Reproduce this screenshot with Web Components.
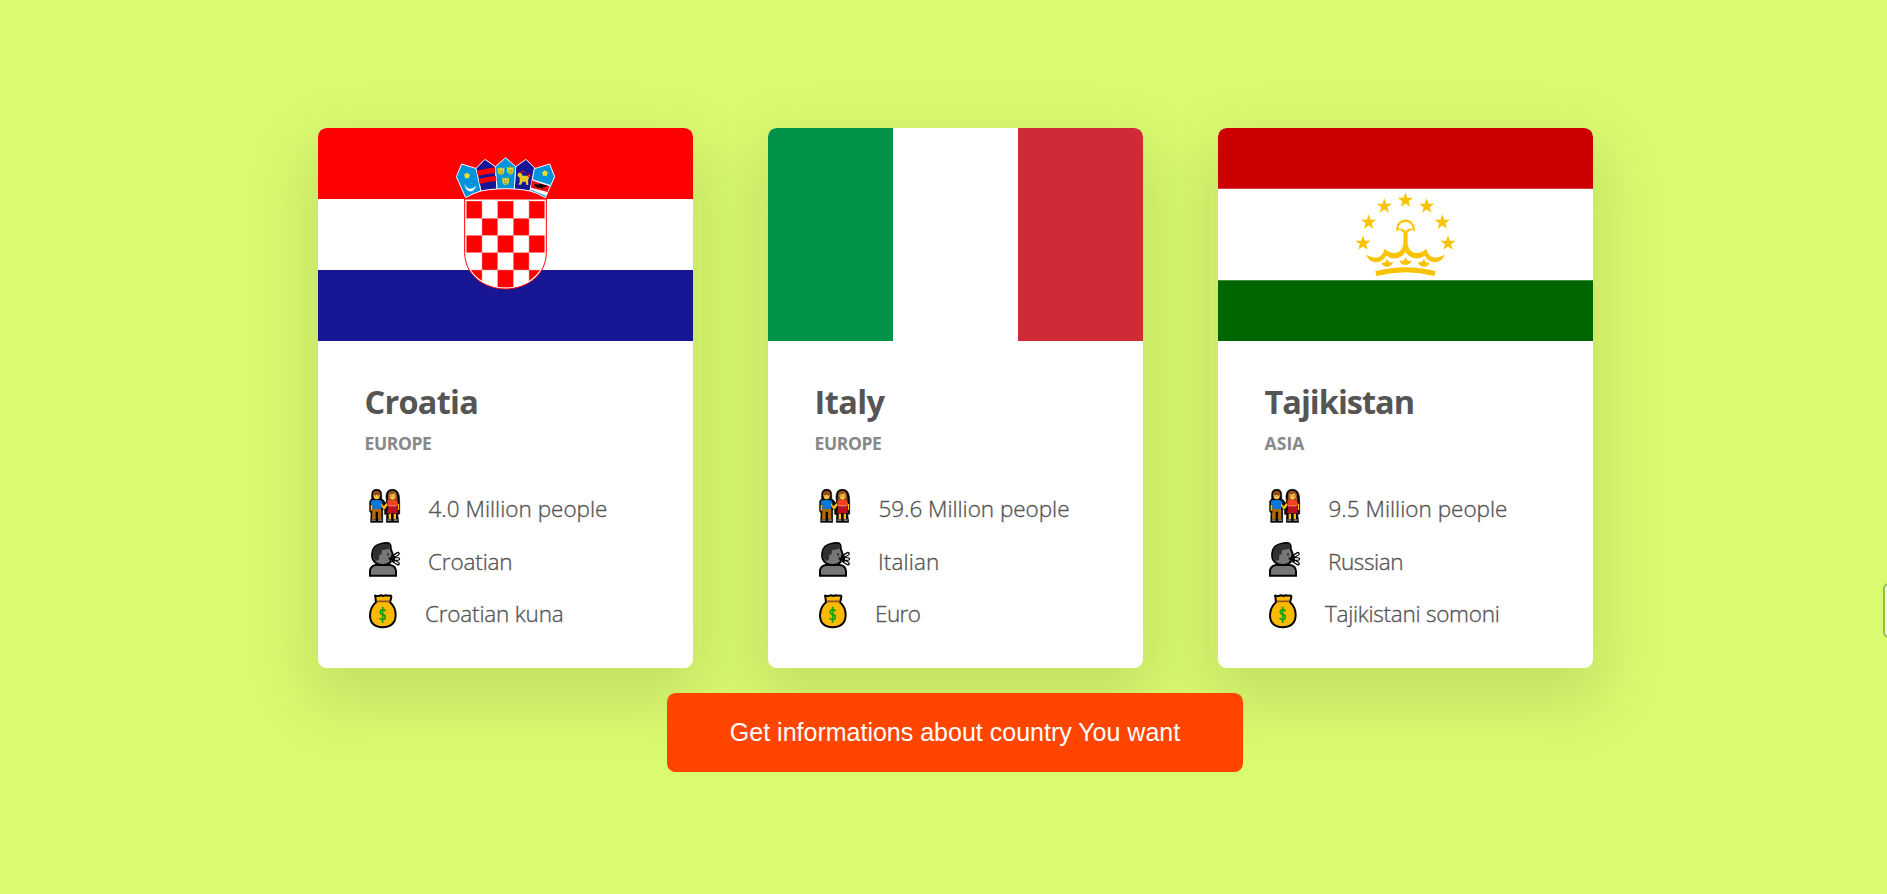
<!DOCTYPE html>
<html lang="en">
<head>
<meta charset="utf-8">
<title>Countries</title>
<style>
html,body{margin:0;height:100%}
body{background:#dafb70;font-family:"Open Sans","Noto Sans",sans-serif;color:#555;overflow:hidden}
</style>
</head>
<body>
<countries-page>
  <country-card>
    <country-flag slot="flag" code="hr"></country-flag>
    <fit-text slot="name" fit="113.5">Croatia</fit-text>
    <fit-text slot="region" fit="67">EUROPE</fit-text>
    <country-fact icon="people"><fit-text fit="179">4.0 Million people</fit-text></country-fact>
    <country-fact icon="speak"><fit-text fit="84.5">Croatian</fit-text></country-fact>
    <country-fact icon="money"><fit-text fit="138.5">Croatian kuna</fit-text></country-fact>
  </country-card>
  <country-card>
    <country-flag slot="flag" code="it"></country-flag>
    <fit-text slot="name" fit="70">Italy</fit-text>
    <fit-text slot="region" fit="67">EUROPE</fit-text>
    <country-fact icon="people"><fit-text fit="191">59.6 Million people</fit-text></country-fact>
    <country-fact icon="speak"><fit-text fit="61.5">Italian</fit-text></country-fact>
    <country-fact icon="money"><fit-text fit="45.5">Euro</fit-text></country-fact>
  </country-card>
  <country-card>
    <country-flag slot="flag" code="tj"></country-flag>
    <fit-text slot="name" fit="149.5">Tajikistan</fit-text>
    <fit-text slot="region" fit="40">ASIA</fit-text>
    <country-fact icon="people"><fit-text fit="179">9.5 Million people</fit-text></country-fact>
    <country-fact icon="speak"><fit-text fit="75">Russian</fit-text></country-fact>
    <country-fact icon="money"><fit-text fit="174.5">Tajikistani somoni</fit-text></country-fact>
  </country-card>
  <action-button slot="action">Get informations about country You want</action-button>
</countries-page>
<side-tab></side-tab>

<script>
const define = (name, html, setup) => customElements.define(name, class extends HTMLElement {
  connectedCallback() {
    if (this.shadowRoot) return;
    this.attachShadow({mode: 'open'}).innerHTML = typeof html === 'function' ? html(this) : html;
    if (setup) setup(this);
  }
});

const star = (x, y, r) => {
  let p = [];
  for (let i = 0; i < 10; i++) {
    const a = -Math.PI / 2 + i * Math.PI / 5, q = i % 2 ? r * .4 : r;
    p.push((x + q * Math.cos(a)).toFixed(1) + ',' + (y + q * Math.sin(a)).toFixed(1));
  }
  return `<polygon points="${p.join(' ')}"/>`;
};

/* Five-by-five red and white board of the Croatian shield */
const board = () => {
  const xs = [79, 126, 173, 220, 267, 314], ys = [168, 220, 271, 323, 375, 428];
  let s = '';
  for (let r = 0; r < 5; r++) for (let c = 0; c < 5; c++) if ((r + c) % 2 === 0)
    s += `<rect x="${xs[c]}" y="${ys[r]}" width="47" height="${ys[r + 1] - ys[r]}"/>`;
  return s;
};
const face = (x, y) => `<g transform="translate(${x} ${y})"><path d="M-10-12l6 4 4-5 4 5 6-4v14q-2 9-10 10-8-1-10-10z" fill="#dcd42a"/><path d="M-4-2v4M4-2v4M-3 7h6" stroke="#465c30" stroke-width="2.4"/></g>`;

const flags = {
  hr: `<svg viewBox="318 128 375 213"><path fill="#f00" d="M318 128h375v71H318z"/><path fill="#fff" d="M318 199h375v71H318z"/><path fill="#171796" d="M318 270h375v71H318z"/>
  <g transform="translate(440 145) scale(.33333)">
   <clipPath id="s"><path d="M78 167H315V322C315 385 260 427 196.500 428C133 427 78 385 78 322z"/></clipPath>
   <path d="M74 162H319V322C319 388 264 431 196.500 432C129 431 74 388 74 322z" fill="#fff" stroke="#f00" stroke-width="3"/>
   <g clip-path="url(#s)" fill="#f00" stroke="#ff9a9a" stroke-width="1.500">${board()}</g>
   <path d="M77 158Q196 106 316 158L319 162H74z" fill="#f00"/>
   <g stroke="#fff" stroke-width="3" stroke-linejoin="round">
    <path d="M49 95L65 57L110 71L123 138Q98 145 77 158z" fill="#0093dd"/>
    <path d="M108 70L135 43L166 65L171 132Q146 133 123 138z" fill="#171796"/>
    <path d="M285 70L258 43L227 65L222 132Q247 133 270 138z" fill="#171796"/>
    <path d="M344 95L329 57L283 71L270 138Q295 145 316 158z" fill="#0093dd"/>
    <path d="M166 65L197 38L227 65L223 132Q197 130 171 132z" fill="#0093dd"/>
   </g>
   <path d="M110 77q22-5 56-10v17q-30 3-52 9zM116 102q28-7 52-9l1 15q-28 2-50 9z" fill="#f00"/>
   <g fill="#f0df2d">${star(81, 92, 11)}${star(315, 85, 11)}<circle cx="81" cy="92" r="7.500"/><circle cx="315" cy="85" r="7.500"/></g>
   <path d="M74 119Q87 142 108 124Q98 147 82 135Q76 129 74 119z" fill="#fff" stroke="#fff"/>
   ${face(183, 79)}${face(211, 77)}${face(197, 109)}
   <path d="M235 83l-3 9 7 6v12l-3 9h7l5-9h9l2 10h6l-1-12 3-11 4-8-8 3h-15l-5-9z" fill="#e8ca27"/><path d="M240 84q5-10 10-5M246 81q8-4 11 3M264 84q3 5 1 12" stroke="#e00020" stroke-width="3" fill="none"/>
   <path d="M277 103L330 119L319 153L272 134z" fill="#fff"/><path d="M275 106L328 124L323 141L273 128z" fill="#ed0c20"/><path d="M282 116l13 3 6-3 14 5 8-1-7 7-8-2 3 6-10-3-7 1-9-5z" fill="#080808"/>
  </g></svg>`,
  it: `<svg viewBox="0 0 375 213"><path fill="#009246" d="M0 0h125v213H0z"/><path fill="#fff" d="M125 0h125v213H125z"/><path fill="#ce2b37" d="M250 0h125v213H250z"/></svg>`,
  tj: `<svg viewBox="1218 128 375 213"><path fill="#fff" d="M1218 128h375v213h-375z"/><path fill="#c00" d="M1218 128h375v60.860h-375z"/><path fill="#060" d="M1218 280.140h375V341h-375z"/>
  <g transform="translate(1345 180) scale(.33333)" fill="#f8c300">
   ${[[181.500, 61], [118, 79], [245, 79], [71, 127], [292, 127], [54, 190], [309, 190]].map(p => star(p[0], p[1], 24)).join('')}
   <path id="a" d="M181.500 119C165 119 153 132 154 154Q159 147 166 150Q173 154 176 157V183C176 202 168 217 153 219C140 221 126 215 119 207C117 218 109 231 96 233C84 235 73 229 65 225C69 238 80 247 96 246C110 245 118 237 124 226C133 235 148 236 159 233C171 230 178 221 181.500 214z" stroke="#f8c300"/>
   <use href="#a" transform="matrix(-1 0 0 1 363 0)"/>
   <path d="M160 146Q162 126 181.500 126T203 146Q191 144 181.500 153Q172 144 160 146z" fill="#fff"/>
   <g id="l"><path d="M181.500 230Q183 239 190 243Q194 241 199 242Q195 255 181.500 255T164 242Q169 241 173 243Q180 239 181.500 230z"/></g>
   <use href="#l" transform="translate(-55 5) rotate(-3 181 243)"/><use href="#l" transform="translate(55 5) rotate(3 181 243)"/>
   <path d="M91 273Q181.500 250 272 273L268 288Q181.500 266 95 288z"/>
  </g></svg>`
};

define('country-flag', el => `<style>:host{display:block;height:213px}svg{display:block;width:375px;height:213px}</style>${flags[el.getAttribute('code')]}`);

const icons = {
  people: `<svg viewBox="36 355 105 108">
   <path d="M47 375Q47 359 62 359T77 375V387L83 392 89 401 91 395 90 380Q91 359 109 359T130 380L131 397 131 433 125 434 128 458H91L92 434H86V420L83 416 80 423 80 458H44L45 431 41 424 41 395 47 387z" fill="#050505" stroke="#050505" stroke-width="2"/>
   <path d="M51 374Q51 363 62 363T73 374V379H51z" fill="#955020"/><path d="M53 376H71V384Q67 389 62 389T53 384z" fill="#ffc247"/><path d="M56 378h3M66 378h3" stroke="#4b2509" stroke-width="2"/>
   <path d="M45 395Q48 391 55 391H70Q77 392 80 399L76 406V418H49V405H44z" fill="#0878d8"/>
   <path d="M44 406h5v17h-5zM76 401l7 9 8-10 5 5-9 13h-5l-7-9z" fill="#ffb913"/>
   <path d="M49 418H76V448H66V426H59V448H48z" fill="#ae6900"/><path d="M47 449h12v5H47zM66 449h12v5H66z" fill="#777"/>
   <path d="M95 390L96 376Q96 363 109 363T123 376L125 394H94z" fill="#955020"/><path d="M101 374Q111 375 117 371L119 383Q115 390 109 390T101 383z" fill="#ffc247"/><path d="M103 379h4M112 379h4" stroke="#5d2b0a" stroke-width="2"/>
   <path d="M93 396Q100 389 109 391Q122 389 127 399L123 410H96z" fill="#f54020"/><path d="M97 406H122V411H97z" fill="#ff6f68"/>
   <path d="M97 411H122L126 431H93z" fill="#bd1021"/><path d="M125 403h4v18h-4zM98 432h7v16h-7zM113 432h7v16h-7z" fill="#ffb913"/><path d="M94 449h12v5H94zM113 449h12v5h-12z" fill="#777"/></svg>`,
  speak: `<svg viewBox="36 512 105 108">
   <path d="M42 616V600Q45 586 59 584H102Q118 586 120 602V616z" fill="#777" stroke="#050505" stroke-width="6"/>
   <path d="M76 520Q88 517 99 519Q105 522 104 535L110 551 108 559 109 564 104 568 104 575Q96 583 83 584Q65 585 55 574Q46 563 49 546Q53 524 76 520z" fill="#777" stroke="#050505" stroke-width="6"/>
   <path d="M76 522Q94 518 101 522L101 535 78 540 77 552 70 553 69 568 59 572Q48 558 52 543Q56 525 76 522z" fill="#303030"/>
   <path d="M96 548v8" stroke="#222" stroke-width="4"/><path d="M98 565l12-3" stroke="#050505" stroke-width="6"/>
   <g stroke="#050505" stroke-width="11" stroke-linecap="round"><path d="M112 559l14-9M112 566h15M112 571l14 9"/></g><g stroke="#fff" stroke-width="4"><path d="M116 557l11-7M117 566h11M116 574l11 6"/></g></svg>`,
  money: `<svg viewBox="36 669 105 108">
   <path d="M58 680Q55 676 60 677L68 678 75 676 82 678 89 676 98 677Q107 674 106 682L102 697Q119 711 119 735Q118 771 80 772Q42 771 42 735Q43 711 60 697z" fill="#ffb900" stroke="#050505" stroke-width="6" stroke-linejoin="round"/>
   <path d="M62 694H101" stroke="#955020" stroke-width="5"/>
   <path d="M89 723Q86 718 80 719Q72 720 73 727Q74 733 81 734Q89 736 88 742Q87 749 80 749Q73 748 71 744M80 710v48" fill="none" stroke="#13a10e" stroke-width="5"/></svg>`
};

define('country-fact', el => {
  const gap = {people: 26, speak: 25.500, money: 22.500}[el.getAttribute('icon')];
  return `<style>:host{display:flex;align-items:center;height:52.5px;line-height:46px;font-size:22.5px;font-weight:300;-webkit-text-stroke:.35px #555;padding-left:3px;gap:${gap}px}svg{display:block;width:35px;height:36px;margin-bottom:3px;flex:none}.text{padding-top:2.5px}</style>${icons[el.getAttribute('icon')]}<div class="text"><slot></slot></div>`;
});

/* Text run tracked so that it fills the width named by its fit attribute */
define('fit-text', `<style>:host{display:block;white-space:nowrap}span{display:inline-block}</style><span><slot></slot></span>`, el => {
  const fit = () => {
    const s = el.shadowRoot.querySelector('span');
    const n = el.textContent.length;
    s.style.letterSpacing = '0';
    s.style.letterSpacing = ((el.getAttribute('fit') - s.getBoundingClientRect().width) / n).toFixed(3) + 'px';
  };
  requestAnimationFrame(fit);
});

define('country-card', `<style>
:host{display:block;width:375px;height:540px;background:#fff;border-radius:8.75px;overflow:hidden;box-shadow:0 25px 62.5px 12.5px rgba(0,0,0,.1)}
.data{padding:41px 0 0 46.5px}
.name{font-size:32.5px;line-height:40px;font-weight:700}
.region{font-size:17.5px;line-height:24px;font-weight:700;color:#888;margin:9px 0 26.5px}
</style><slot name="flag"></slot><div class="data"><div class="name"><slot name="name"></slot></div><div class="region"><slot name="region"></slot></div><slot></slot></div>`);

define('action-button', `<style>:host{display:block}
button{display:block;box-sizing:border-box;width:576px;height:79px;padding:0;border:0;border-radius:8.75px;background:#ff4500;color:#fff;font:25px/79px "Liberation Sans",Arial,sans-serif;text-align:center;white-space:nowrap}
</style><button><slot></slot></button>`);

define('countries-page', `<style>
:host{display:flex;flex-direction:column;align-items:center;box-sizing:border-box;height:894px;padding-top:128px}
.cards{display:flex;gap:75px;width:1275px;margin-left:24px}
.action{margin:25px 0 0 23px;position:relative}
</style><div class="cards"><slot></slot></div><div class="action"><slot name="action"></slot></div>`);

define('side-tab', `<style>:host{display:block;position:fixed;right:-30px;top:583px;width:34px;height:55px;box-sizing:border-box;border:2px solid #8bc53f;border-radius:6px;background:#f5f5f5}</style>`);
</script>
</body>
</html>
